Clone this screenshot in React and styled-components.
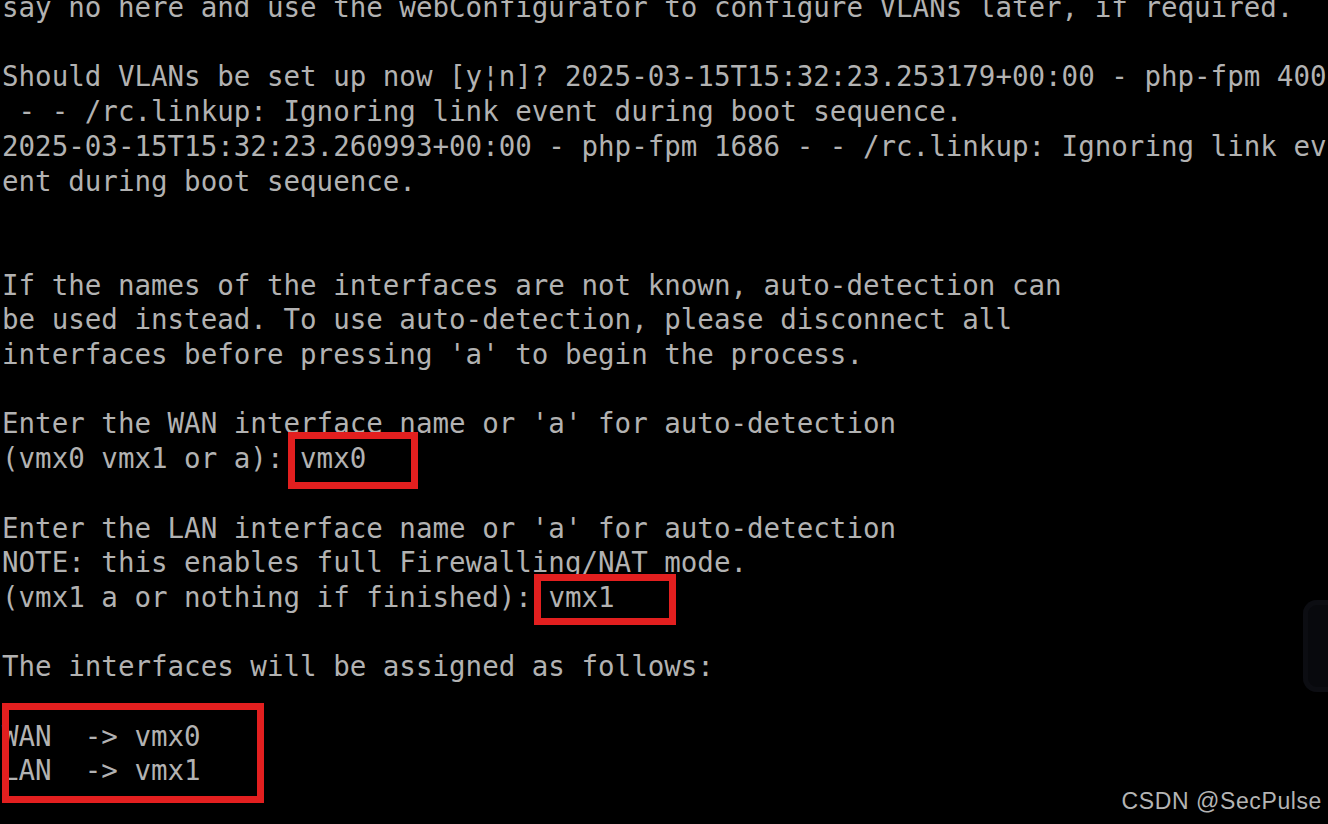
import React from 'react';
import styled, { createGlobalStyle } from 'styled-components';

const GlobalStyle = createGlobalStyle`
  html, body {
    margin: 0;
    padding: 0;
    background: #000;
    overflow: hidden;
  }
`;

const LINE = 34.71;

const S = {
  Screen: styled.div`
    position: relative;
    width: 1328px;
    height: 824px;
    background: #000;
    overflow: hidden;
  `,
  Console: styled.div`
    margin-top: -10px;
    padding-left: 2px;
    font-family: "DejaVu Sans Mono", "Liberation Mono", monospace;
    font-size: 27.5px;
    line-height: ${LINE}px;
    color: #b2b2b2;
    white-space: pre;
  `,
  Line: styled.div`
    height: ${LINE}px;
  `,
  Mark: styled.span`
    position: relative;
    display: inline-block;
    height: ${LINE}px;
    vertical-align: top;

    &::after {
      content: '';
      position: absolute;
      top: ${(p) => p.$t}px;
      right: ${(p) => p.$r}px;
      bottom: ${(p) => p.$b}px;
      left: ${(p) => p.$l}px;
      border: 7px solid #e21f1f;
    }
  `,
  Group: styled.div`
    position: relative;

    &::after {
      content: '';
      position: absolute;
      top: -15.6px;
      left: 0;
      width: 262px;
      height: 100px;
      box-sizing: border-box;
      border: 7px solid #e21f1f;
    }
  `,
  SideTab: styled.div`
    position: absolute;
    top: 600px;
    left: 1303px;
    width: 40px;
    height: 92px;
    border-radius: 14px;
    background: #08090d;
    box-shadow: inset 0 0 0 5px #0c0d12;
  `,
  Watermark: styled.div`
    position: absolute;
    right: 6px;
    bottom: 9px;
    font-family: "Liberation Sans", Arial, sans-serif;
    font-size: 23px;
    letter-spacing: 0.6px;
    color: #b4b4b4;
  `,
};

const App = () => {
  return (
    <S.Screen>
      <GlobalStyle />
      <S.Console>
        <S.Line>say no here and use the webConfigurator to configure VLANs later, if required.</S.Line>
        <S.Line />
        <S.Line>Should VLANs be set up now [y¦n]? 2025-03-15T15:32:23.253179+00:00 - php-fpm 400</S.Line>
        <S.Line> - - /rc.linkup: Ignoring link event during boot sequence.</S.Line>
        <S.Line>2025-03-15T15:32:23.260993+00:00 - php-fpm 1686 - - /rc.linkup: Ignoring link ev</S.Line>
        <S.Line>ent during boot sequence.</S.Line>
        <S.Line />
        <S.Line />
        <S.Line>If the names of the interfaces are not known, auto-detection can</S.Line>
        <S.Line>be used instead. To use auto-detection, please disconnect all</S.Line>
        <S.Line>interfaces before pressing 'a' to begin the process.</S.Line>
        <S.Line />
        <S.Line>Enter the WAN interface name or 'a' for auto-detection</S.Line>
        <S.Line>
          (vmx0 vmx1 or a): <S.Mark $t={-9.2} $r={-52} $b={-13.1} $l={-11.9}>vmx0</S.Mark>
        </S.Line>
        <S.Line />
        <S.Line>Enter the LAN interface name or 'a' for auto-detection</S.Line>
        <S.Line>NOTE: this enables full Firewalling/NAT mode.</S.Line>
        <S.Line>
          (vmx1 a or nothing if finished): <S.Mark $t={-6.1} $r={-61.6} $b={-10.2} $l={-14.2}>vmx1</S.Mark>
        </S.Line>
        <S.Line />
        <S.Line>The interfaces will be assigned as follows:</S.Line>
        <S.Line />
        <S.Group>
          <S.Line>WAN  -&gt; vmx0</S.Line>
          <S.Line>LAN  -&gt; vmx1</S.Line>
        </S.Group>
      </S.Console>
      <S.SideTab />
      <S.Watermark>CSDN @SecPulse</S.Watermark>
    </S.Screen>
  );
};

export default App;
